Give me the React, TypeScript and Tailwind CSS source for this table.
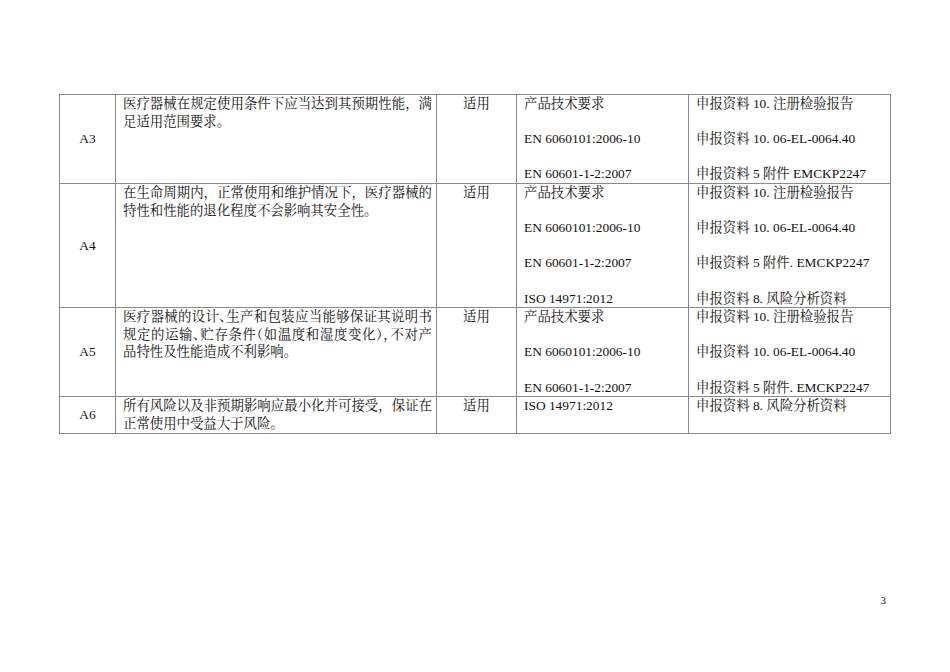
import React from "react";

const font = {
  fontFamily:
    '"Liberation Serif", "Noto Serif CJK SC", "Noto Sans CJK SC", serif',
};

type Row = {
  id: string;
  h: string;
  desc: string[];
  halt?: boolean;
  std: string[];
  refs: string[];
};

const rows: Row[] = [
  {
    id: "A3",
    h: "h-[89px]",
    desc: ["医疗器械在规定使用条件下应当达到其预期性能，满足适用范围要求。"],
    std: ["产品技术要求", "EN 6060101:2006-10", "EN 60601-1-2:2007"],
    refs: [
      "申报资料 10. 注册检验报告",
      "申报资料 10. 06-EL-0064.40",
      "申报资料 5 附件 EMCKP2247",
    ],
  },
  {
    id: "A4",
    h: "h-[124px]",
    desc: [
      "在生命周期内，正常使用和维护情况下，医疗器械的特性和性能的退化程度不会影响其安全性。",
    ],
    std: [
      "产品技术要求",
      "EN 6060101:2006-10",
      "EN 60601-1-2:2007",
      "ISO 14971:2012",
    ],
    refs: [
      "申报资料 10. 注册检验报告",
      "申报资料 10. 06-EL-0064.40",
      "申报资料 5 附件. EMCKP2247",
      "申报资料 8. 风险分析资料",
    ],
  },
  {
    id: "A5",
    h: "h-[88px]",
    halt: true,
    desc: [
      "医疗器械的设计、生产和包装应当能够保证其说明书",
      "规定的运输、贮存条件（如温度和湿度变化），不对产",
      "品特性及性能造成不利影响。",
    ],
    std: ["产品技术要求", "EN 6060101:2006-10", "EN 60601-1-2:2007"],
    refs: [
      "申报资料 10. 注册检验报告",
      "申报资料 10. 06-EL-0064.40",
      "申报资料 5 附件. EMCKP2247",
    ],
  },
  {
    id: "A6",
    h: "h-[37px]",
    desc: ["所有风险以及非预期影响应最小化并可接受，保证在正常使用中受益大于风险。"],
    std: ["ISO 14971:2012"],
    refs: ["申报资料 8. 风险分析资料"],
  },
];

export default function App() {
  return (
    <div
      className="w-[950px] h-[672px] bg-white text-[#111] text-[13.4px] leading-[17.6px] pt-[94px] pl-[59px]"
      style={font}
    >
      <table className="table-fixed border-collapse w-[831px]">
        <colgroup>
          <col className="w-[56px]" />
          <col className="w-[321px]" />
          <col className="w-[80px]" />
          <col className="w-[172px]" />
          <col className="w-[202px]" />
        </colgroup>
        <tbody>
          {rows.map((r) => (
            <tr key={r.id} className={r.h}>
              <td className="border border-[#8a8a8a] text-center align-middle p-0">
                {r.id}
              </td>
              <td className="border border-[#8a8a8a] align-top pl-[7px] pr-[4px] py-0 text-justify">
                {r.halt ? (
                  <div className="[font-feature-settings:'halt']">
                    {r.desc.map((l, i) => (
                      <div
                        key={i}
                        className={
                          i < r.desc.length - 1
                            ? "whitespace-nowrap [text-align-last:justify]"
                            : "whitespace-nowrap"
                        }
                      >
                        {l}
                      </div>
                    ))}
                  </div>
                ) : (
                  r.desc[0]
                )}
              </td>
              <td className="border border-[#8a8a8a] align-top text-center p-0">
                适用
              </td>
              <td className="border border-[#8a8a8a] align-top pl-[7px] p-0">
                <div className="flex flex-col gap-[17.6px]">
                  {r.std.map((s) => (
                    <div key={s}>{s}</div>
                  ))}
                </div>
              </td>
              <td className="border border-[#8a8a8a] align-top pl-[7px] p-0">
                <div className="flex flex-col gap-[17.6px]">
                  {r.refs.map((s) => (
                    <div key={s} className="whitespace-nowrap">
                      {s}
                    </div>
                  ))}
                </div>
              </td>
            </tr>
          ))}
        </tbody>
      </table>
      <div className="mt-[159px] w-[827px] text-right text-[11px] leading-[14px]">
        3
      </div>
    </div>
  );
}
